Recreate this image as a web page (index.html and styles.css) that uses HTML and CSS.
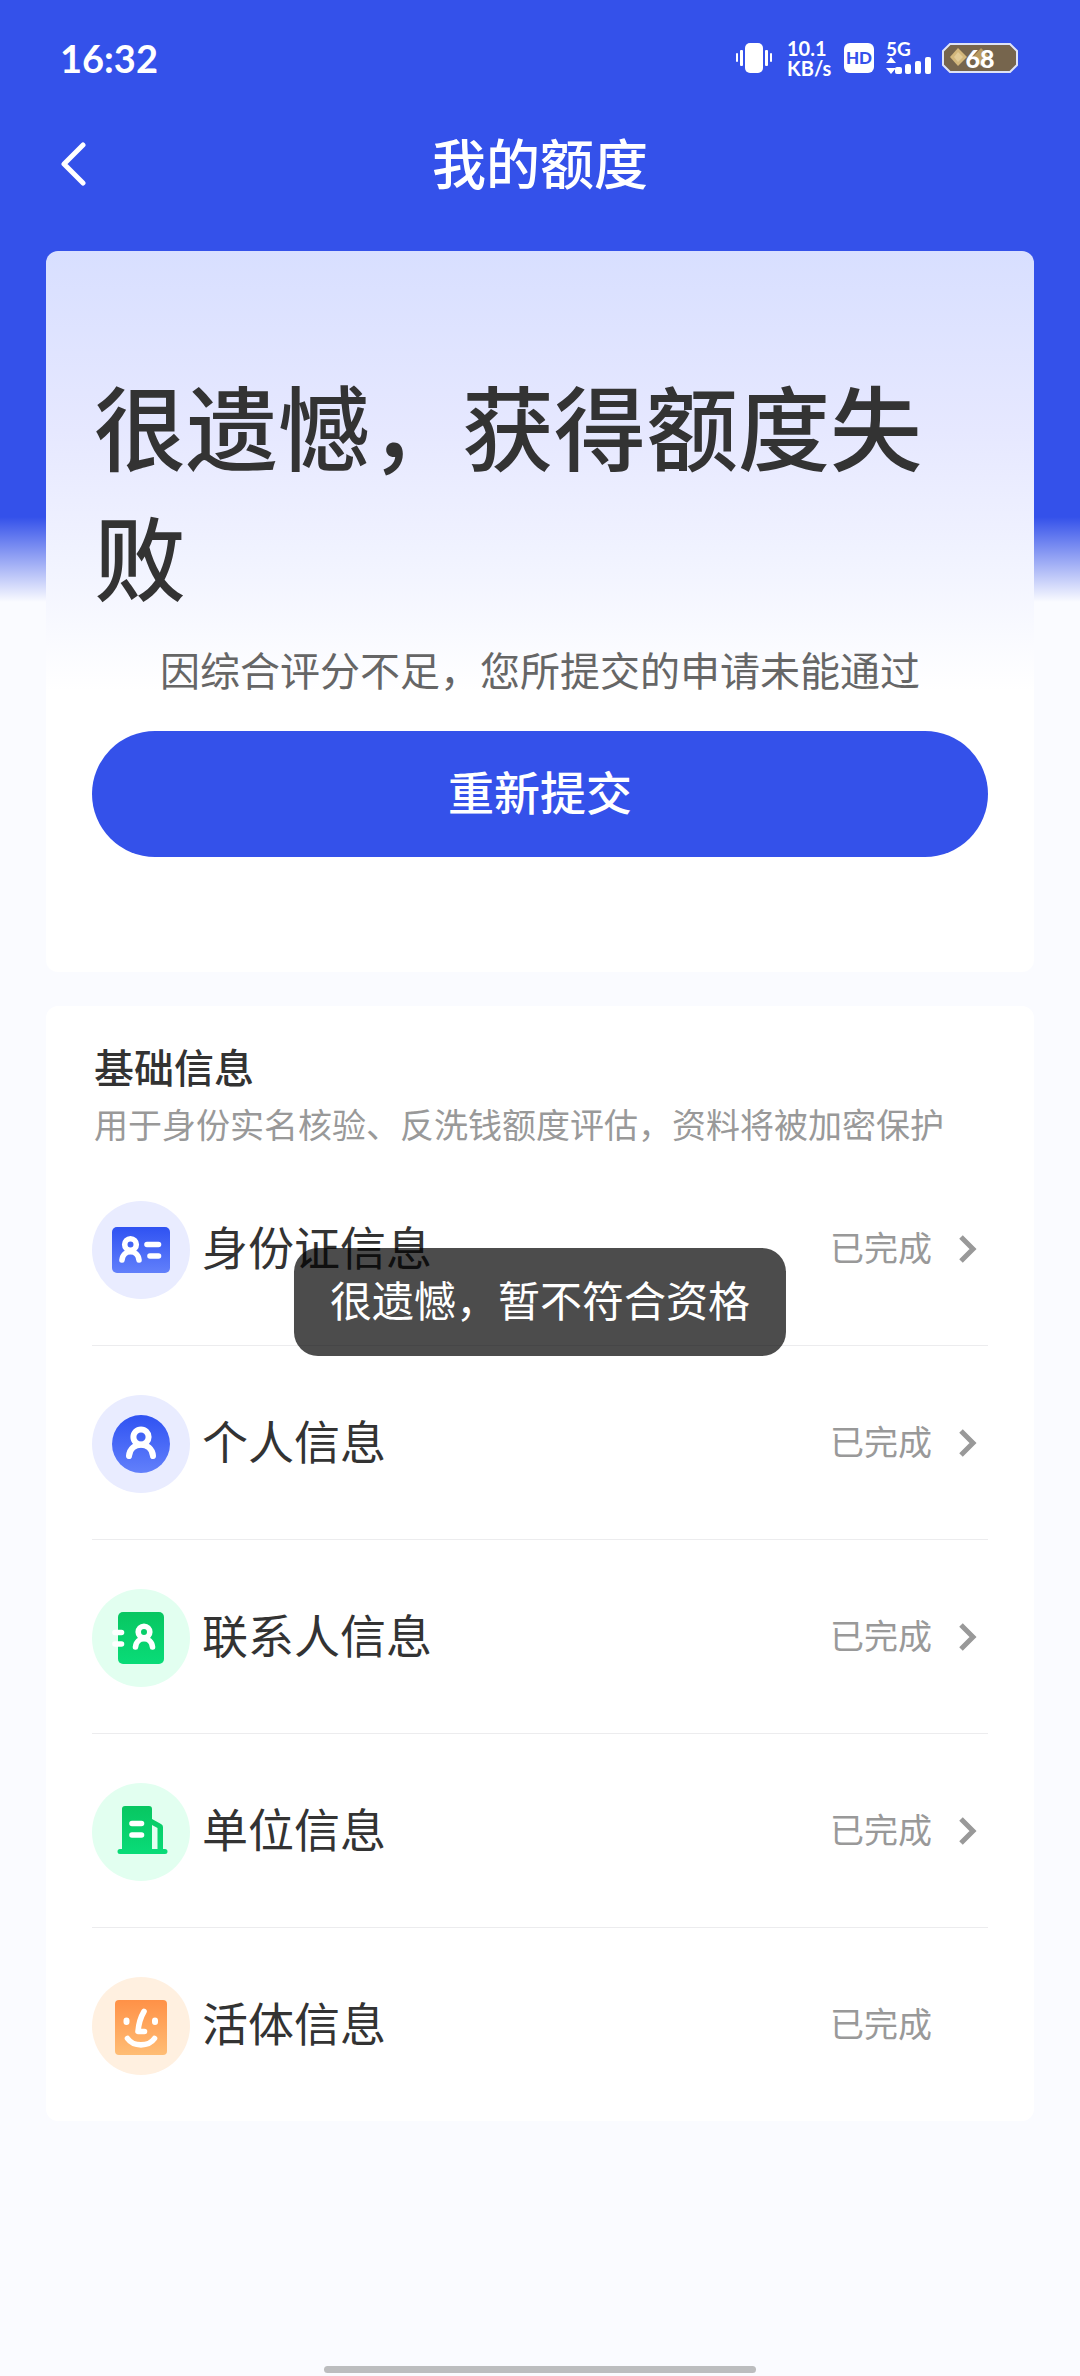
FILE: index.html
```html
<!DOCTYPE html>
<html lang="zh-CN">
<head>
<meta charset="utf-8">
<meta name="viewport" content="width=device-width, initial-scale=1">
<title>我的额度</title>
<link rel="stylesheet" href="styles.css">
</head>
<body>
<div class="page">
  <div class="status-bar">
    <time class="clock">16:32</time>
    <div class="status-icons">
      <svg class="vibrate" width="36" height="30" viewBox="0 0 36 30" aria-hidden="true" fill="#fff">
        <rect x="9" y="0" width="18" height="30" rx="5"/>
        <rect x="4" y="7" width="3" height="16" rx="1"/><rect x="0" y="10" width="2" height="9" rx="1"/>
        <rect x="29" y="7" width="3" height="16" rx="1"/><rect x="34" y="10" width="2" height="9" rx="1"/>
      </svg>
      <div class="speed"><span>10.1</span><span>KB/s</span></div>
      <div class="hd">HD</div>
      <div class="signal">
        <span>5G</span>
        <svg width="46" height="18" viewBox="0 0 46 18" aria-hidden="true" fill="#fff">
          <path d="M5 1l5 6H0zM5 18l-5-6h10z"/>
          <rect x="9" y="11" width="7" height="7" rx="2"/><rect x="19" y="8" width="6" height="10" rx="2"/>
          <rect x="29" y="5" width="6" height="13" rx="2"/><rect x="39" y="1" width="6" height="17" rx="2"/>
        </svg>
      </div>
      <div class="battery">
        <svg width="76" height="30" viewBox="0 0 76 30" aria-hidden="true">
          <path d="M8 1h60l3 3 4 4v14l-4 4-3 3H8l-3-3-4-4V8l4-4z" fill="#76654d" stroke="#dfe3f6" stroke-width="2"/>
          <path d="M16 5l9 9-9 9-8-9z" fill="#d3b77c"/><path d="M16 9l5 5-5 5-4-5z" fill="#e2cb97"/>
          <path d="M39 5l9 9-9 9-8-9z" fill="#b79a60"/>
        </svg>
        <span>68</span>
      </div>
    </div>
  </div>

  <header class="nav">
    <button class="back" type="button" aria-label="返回">
      <svg width="26" height="44" viewBox="0 0 26 44" aria-hidden="true"><path d="M23 3L4 22l19 19" fill="none" stroke="#fff" stroke-width="5" stroke-linecap="round" stroke-linejoin="round"/></svg>
    </button>
    <h1>我的额度</h1>
  </header>

  <main class="content">
    <section class="card result">
      <h2>很遗憾，获得额度失败</h2>
      <p>因综合评分不足，您所提交的申请未能通过</p>
      <button class="submit" type="button">重新提交</button>
    </section>

    <section class="card info">
      <h3>基础信息</h3>
      <p class="hint">用于身份实名核验、反洗钱额度评估，资料将被加密保护</p>
      <ul class="rows">
        <li><a class="row" href="#id">
          <svg class="icon" viewBox="0 0 98 98" aria-hidden="true">
            <defs><linearGradient id="blue" x2="0" y2="1"><stop stop-color="#2f52f2"/><stop offset="1" stop-color="#6280fb"/></linearGradient></defs>
            <circle cx="49" cy="49" r="49" fill="#e9ecff"/>
            <rect x="20" y="26" width="58" height="46" rx="5" fill="url(#blue)"/>
            <g fill="none" stroke="#fff" stroke-width="5.600" stroke-linecap="round"><circle cx="38.500" cy="43.500" r="5.800"/><path d="M30 59c1-11 16-11 17 0"/><path d="M55 43.500h11.500M58 55h8.500"/></g>
          </svg>
          <span class="label">身份证信息</span><span class="state">已完成</span>
          <svg class="arrow" viewBox="0 0 20 32" aria-hidden="true"><path d="M3 3l12 12L3 27"/></svg>
        </a></li>
        <li><a class="row" href="#person">
          <svg class="icon" viewBox="0 0 98 98" aria-hidden="true">
            <circle cx="49" cy="49" r="49" fill="#e9ecff"/><circle cx="49" cy="49" r="29" fill="url(#blue)"/>
            <g fill="none" stroke="#fff" stroke-width="6" stroke-linecap="round"><circle cx="49" cy="42" r="7.600"/><path d="M37 61c1-15 23-15 24 0"/></g>
          </svg>
          <span class="label">个人信息</span><span class="state">已完成</span>
          <svg class="arrow" viewBox="0 0 20 32" aria-hidden="true"><path d="M3 3l12 12L3 27"/></svg>
        </a></li>
        <li><a class="row" href="#contacts">
          <svg class="icon" viewBox="0 0 98 98" aria-hidden="true">
            <defs><linearGradient id="green" x2="0" y2="1"><stop stop-color="#08c661"/><stop offset="1" stop-color="#09dc78"/></linearGradient></defs>
            <circle cx="49" cy="49" r="49" fill="#e2fff0"/>
            <rect x="26" y="23" width="46" height="52" rx="5" fill="url(#green)"/>
            <g fill="none" stroke="#fff" stroke-width="5.600" stroke-linecap="round"><circle cx="52" cy="43" r="5.800"/><path d="M43.500 58c1-11 16-11 17 0"/><path d="M23 43.500h6.500M23 55h6.500"/></g>
          </svg>
          <span class="label">联系人信息</span><span class="state">已完成</span>
          <svg class="arrow" viewBox="0 0 20 32" aria-hidden="true"><path d="M3 3l12 12L3 27"/></svg>
        </a></li>
        <li><a class="row" href="#company">
          <svg class="icon" viewBox="0 0 98 98" aria-hidden="true">
            <circle cx="49" cy="49" r="49" fill="#e2fff0"/>
            <path d="M33 23h24a3 3 0 0 1 3 3v10l9 5q2 1 2 3v22h2a2.500 2.500 0 0 1 0 5H28a2.500 2.500 0 0 1 0-5h2V26a3 3 0 0 1 3-3z" fill="url(#green)"/>
            <path d="M60 42l5.500 3v21H60z" fill="#e2fff0"/>
            <path d="M40 40.500h9.500M40 52h9.500" stroke="#fff" stroke-width="5.600" stroke-linecap="round"/>
          </svg>
          <span class="label">单位信息</span><span class="state">已完成</span>
          <svg class="arrow" viewBox="0 0 20 32" aria-hidden="true"><path d="M3 3l12 12L3 27"/></svg>
        </a></li>
        <li><div class="row">
          <svg class="icon" viewBox="0 0 98 98" aria-hidden="true">
            <defs><linearGradient id="orange" x2="0" y2="1"><stop stop-color="#ff9147"/><stop offset="1" stop-color="#ffbd75"/></linearGradient></defs>
            <circle cx="49" cy="49" r="49" fill="#fff0e0"/>
            <rect x="23" y="23" width="52" height="55" rx="4" fill="url(#orange)"/>
            <g fill="none" stroke="#fff" stroke-width="5.600" stroke-linecap="round" stroke-linejoin="round"><path d="M34.500 43.500v1.500M63 43.500v1.500" stroke-width="6"/><path d="M52 34.500c-3 5-5.500 14-6 20h6.500"/><path d="M35.500 61.500c6 8.500 21 8.500 27 0"/></g>
          </svg>
          <span class="label">活体信息</span><span class="state">已完成</span><span class="arrow"></span>
        </div></li>
      </ul>
    </section>
  </main>
  <div class="home-bar"></div>
  <div class="toast" role="status">很遗憾，暂不符合资格</div>
</div>
</body>
</html>
```

FILE: styles.css
```css
* {
  box-sizing: border-box;
  margin: 0;
  padding: 0;
}

body {
  font-family: "Noto Sans CJK SC", sans-serif;
  color: #333;
  background: #fafbff;
}

button {
  border: 0;
  background: none;
  font-family: inherit;
  cursor: pointer;
}

a {
  color: inherit;
  text-decoration: none;
}

.page {
  position: relative;
  display: flex;
  flex-direction: column;
  min-height: 100vh;
  background: linear-gradient(#3451ea 517px, #fafbff 602px);
}

/* Status bar */
.status-bar {
  display: flex;
  align-items: center;
  justify-content: space-between;
  height: 116px;
  padding: 0 62px 0 60px;
  color: #fff;
  font-family: Lato, "Noto Sans", sans-serif;
  font-weight: 700;
}

.clock {
  font-size: 38px;
}

.status-icons {
  display: flex;
  align-items: center;
}

.speed {
  display: flex;
  flex-direction: column;
  width: 44px;
  margin: 0 13px 0 15px;
  font-size: 20px;
  line-height: 20px;
}

.hd {
  width: 30px;
  height: 30px;
  border-radius: 6px;
  background: #fff;
  color: #3451ea;
  font-size: 17px;
  font-weight: 900;
  line-height: 30px;
  text-align: center;
}

.signal {
  display: flex;
  flex-direction: column;
  width: 46px;
  margin: 0 10px 0 12px;
  font-size: 19px;
  line-height: 14px;
}

.battery {
  display: grid;
  align-items: center;
  justify-items: center;
}

.battery > * {
  grid-area: 1 / 1;
}

.battery span {
  font-size: 25px;
  font-weight: 900;
  line-height: 30px;
}

/* Navigation */
.nav {
  display: grid;
  grid-template-columns: 46px 1fr 46px;
  align-items: center;
  height: 95px;
  padding: 0 60px;
  color: #fff;
}

.back {
  display: flex;
}

.nav h1 {
  padding-bottom: 4px;
  font-size: 54px;
  font-weight: 500;
  line-height: 80px;
  text-align: center;
}

/* Cards */
.content {
  display: flex;
  flex-direction: column;
  gap: 34px;
  padding: 40px 46px 0;
}

.card {
  border-radius: 12px;
  background: #fff;
  padding: 0 46px;
}

.result {
  padding-top: 108px;
  padding-bottom: 115px;
  background: linear-gradient(#d8dfff, #e6e8ff 180px, #f2f4ff 320px, #fff 440px);
}

.result h2 {
  padding-left: 2px;
  font-size: 92px;
  font-weight: 500;
  line-height: 130px;
}

.result p {
  margin-top: 20px;
  color: #666;
  font-size: 40px;
  line-height: 60px;
  text-align: center;
}

.submit {
  display: block;
  width: 100%;
  height: 126px;
  margin-top: 32px;
  padding-bottom: 8px;
  border-radius: 63px;
  background: #3451ea;
  color: #fff;
  font-size: 46px;
  font-weight: 500;
}

.info {
  padding-top: 30px;
}

.info h3 {
  padding-left: 2px;
  font-size: 40px;
  font-weight: 500;
  line-height: 60px;
}

.hint {
  padding-left: 2px;
  color: #999;
  font-size: 34px;
  line-height: 55px;
}

/* Rows */
.rows {
  list-style: none;
}

.row {
  display: flex;
  align-items: center;
  padding: 50px 10px 46px 0;
}

li + li .row {
  border-top: 1px solid #ececee;
  padding-top: 49px;
}

.icon {
  width: 98px;
  height: 98px;
}

.label {
  flex: 1;
  padding: 0 0 10px 12px;
  font-size: 46px;
  line-height: 68px;
}

.state {
  padding-bottom: 6px;
  color: #999;
  font-size: 34px;
  line-height: 50px;
}

.arrow {
  width: 20px;
  height: 32px;
  margin-left: 26px;
  fill: none;
  stroke: #999;
  stroke-width: 5;
}

.home-bar {
  width: 40%;
  height: 7px;
  margin: auto auto 3px;
  border-radius: 4px;
  background: #bcbdbf;
}

/* Floating message */
.toast {
  position: absolute;
  top: 1248px;
  left: 50%;
  transform: translateX(-50%);
  padding: 19px 36px 25px;
  border-radius: 24px;
  background: rgba(0, 0, 0, 0.7);
  color: #fff;
  font-size: 42px;
  line-height: 64px;
  white-space: nowrap;
}
```
